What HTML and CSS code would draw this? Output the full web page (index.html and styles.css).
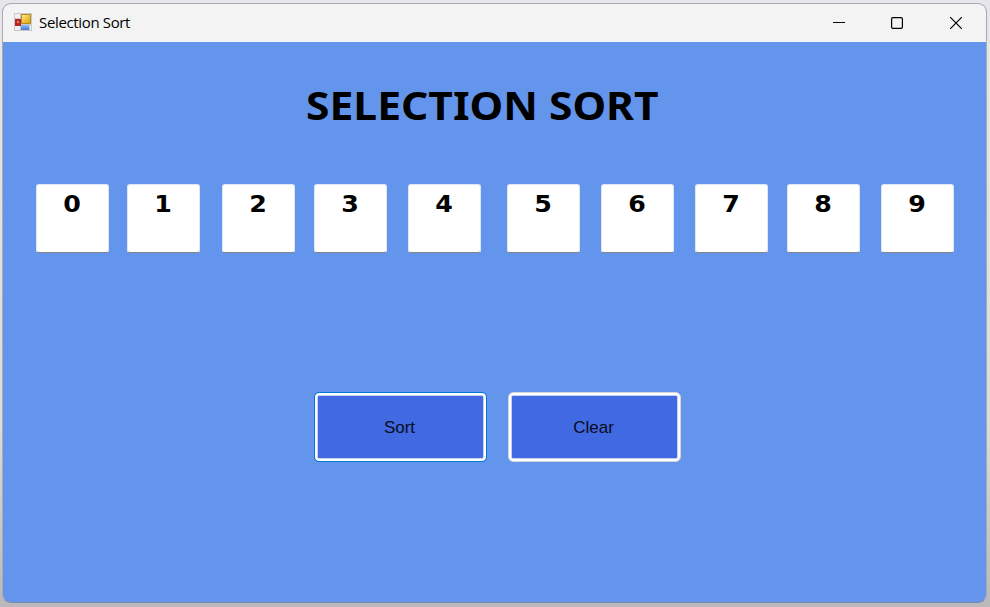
FILE: index.html
```
<!DOCTYPE html>
<html lang="en">
<head>
<meta charset="utf-8">
<title>Selection Sort</title>
<link rel="stylesheet" href="styles.css">
</head>
<body>
<main class="window">
  <header class="titlebar">
    <svg class="app-icon" width="18" height="18" viewBox="0 0 18 18">
      <defs>
        <linearGradient id="gold" x2="1" y2="1"><stop stop-color="#ffe98a"/><stop offset="1" stop-color="#dfa000"/></linearGradient>
        <linearGradient id="blue" x2="0" y2="1"><stop stop-color="#8dbcff"/><stop offset="1" stop-color="#3f78d8"/></linearGradient>
      </defs>
      <path fill="#c9c9c9" d="M0 0h18v18H0z"/>
      <path fill="#f0f0f0" d="M1 1h5v4H1zM1 13h5v4H1zM16 12h1v5h-1z"/>
      <path fill="#b52a20" d="M1 6h6v7H1z"/><path fill="#ef7468" d="M3 8h2v2H3z"/>
      <path fill="url(#gold)" stroke="#b98a1c" d="M7.500 1.500h9v9h-9z"/>
      <path fill="url(#blue)" d="M7 12h8v5H7z"/>
    </svg>
    <span class="caption">Selection Sort</span>
    <svg class="controls" width="130" height="14" viewBox="0 0 130 14" fill="none" stroke="#000">
      <path d="M1 6.500h12" stroke-width="1"/>
      <rect x="59.600" y="1.600" width="10.800" height="10.800" rx="1.300" stroke-width="1.200"/>
      <path d="M118.200 1.200l11.600 11.600M129.800 1.200l-11.600 11.600" stroke-width="1.200"/>
    </svg>
  </header>
  <section class="content">
    <h1>SELECTION SORT</h1>
    <div class="numbers">
      <div class="box"><span>0</span></div>
      <div class="box"><span>1</span></div>
      <div class="box"><span>2</span></div>
      <div class="box"><span>3</span></div>
      <div class="box"><span>4</span></div>
      <div class="box"><span>5</span></div>
      <div class="box"><span>6</span></div>
      <div class="box"><span>7</span></div>
      <div class="box"><span>8</span></div>
      <div class="box"><span>9</span></div>
    </div>
    <div class="actions">
      <button class="btn focused">Sort</button>
      <button class="btn">Clear</button>
    </div>
  </section>
</main>
</body>
</html>
```
FILE: styles.css
```
* { box-sizing: border-box; }
html { height: 100%; }
body {
  margin: 0;
  height: 607px;
  padding: 3px 3px 5px 2px;
  overflow: hidden;
  background: linear-gradient(#e6e6eb 0, #dcdce0 70%, #b9b8ba 100%);
}
.window {
  width: 985px;
  height: 600px;
  border: 1px solid #aaabb0;
  border-bottom-color: #7b8baa;
  border-radius: 9px;
  overflow: hidden;
  background: #6495ed;
}
.titlebar {
  height: 38px;
  display: flex;
  align-items: center;
  padding: 0 24px 0 11px;
  background: #f3f3f3;
}
.app-icon { margin-top: -3px; }
.caption {
  margin: -2px auto 0 7px;
  font: 15px/20px "Open Sans", sans-serif;
  letter-spacing: -0.35px;
  color: #000;
}
.content {
  display: flex;
  flex-direction: column;
}
h1 {
  align-self: flex-start;
  margin: 35px 0 0 303px;
  font: bold 40px/56px "Noto Sans", sans-serif;
  white-space: nowrap;
  color: #000;
  transform: scaleX(1.065);
  transform-origin: 0 0;
}
.numbers {
  display: grid;
  grid-template-columns: 91px 95px 92px 94px 99px 94px 94px 92px 94px 73px;
  margin: 51px 0 0 32.500px;
}
.box {
  width: 73px;
  height: 69px;
  padding-top: 5px;
  border: 1px solid #dfe7f5;
  border-bottom: 1px solid #858585;
  border-radius: 3px;
  background: #fff;
  text-align: center;
  font: bold 23px/29px "DejaVu Sans", sans-serif;
  color: #000;
}
.box span {
  display: inline-block;
  transform: scaleX(1.1);
}
.actions {
  display: flex;
  gap: 21px;
  margin: 139px 0 0 311px;
}
.btn {
  width: 173px;
  height: 70px;
  padding: 2px 2px 0 0;
  border: 1px solid #d3d6da;
  border-radius: 5px;
  background: #4169e1;
  box-shadow: inset 0 0 0 2px #fff, inset 0 0 0 3px #c4d0f5;
  font: 17px/20px "Liberation Sans", sans-serif;
  color: #080c20;
}
.focused { border-color: #0078d7; }
```
